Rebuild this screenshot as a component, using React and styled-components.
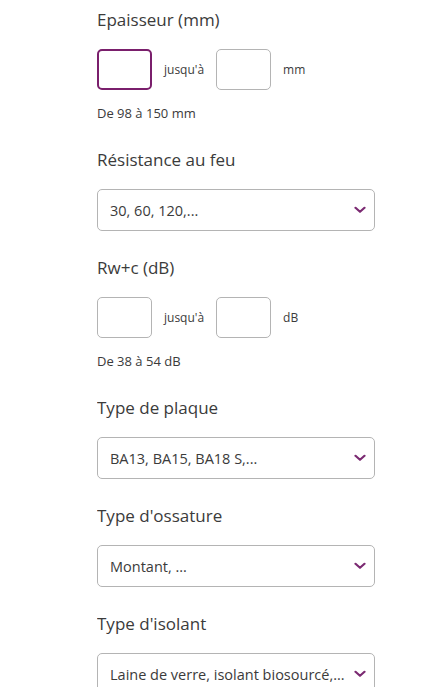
import styled, { createGlobalStyle } from "styled-components"

const GlobalStyle = createGlobalStyle`
  html, body {
    margin: 0;
    padding: 0;
    background: #ffffff;
  }
  body {
    font-family: "Open Sans", "Noto Sans", sans-serif;
    color: #3b3b3b;
  }
`

const Panel = styled.div`
  display: flex;
  flex-direction: column;
  width: 278px;
  margin-left: 97px;
  padding-top: 10px;
  height: 687px;
  overflow: hidden;
  box-sizing: border-box;
`

const Field = styled.div`
  display: flex;
  flex-direction: column;
  margin-bottom: ${(p) => (p.$hint ? "29px" : "27px")};
`

const Label = styled.div`
  font-size: 17px;
  line-height: 20px;
  color: #3b3b3b;
  margin-bottom: 19px;
`

const RangeRow = styled.div`
  display: flex;
  align-items: center;
  gap: 12px;
`

const NumberBox = styled.input`
  width: 55px;
  height: 41px;
  box-sizing: border-box;
  border: ${(p) => (p.$active ? "2px solid #7a1f6c" : "1px solid #b4b4b4")};
  border-radius: 5px;
  background: #fff;
  outline: none;
  padding: 0 8px;
  margin: 0;
  font-family: inherit;
`

const Small = styled.span`
  font-size: 12px;
  color: #3b3b3b;
`

const Hint = styled.div`
  font-size: 13px;
  line-height: 16px;
  color: #3b3b3b;
  margin-top: 15px;
`

const SelectBox = styled.div`
  display: flex;
  align-items: center;
  justify-content: space-between;
  height: 42px;
  box-sizing: border-box;
  border: 1px solid #b4b4b4;
  border-radius: 5px;
  padding: 0 8px 0 12px;
  font-size: 14.5px;
  color: #3b3b3b;
  white-space: nowrap;
`

const Chevron = () => (
  <svg width="12" height="8" viewBox="0 0 12 8">
    <path d="M1.5 1.8 L6 5.8 L10.5 1.8" fill="none" stroke="#7b2a72" strokeWidth="2.2" strokeLinecap="round" strokeLinejoin="round" />
  </svg>
)

function Range({ label, unit, hint, active }) {
  return (
    <Field $hint>
      <Label>{label}</Label>
      <RangeRow>
        <NumberBox $active={active} />
        <Small>jusqu'à</Small>
        <NumberBox />
        <Small>{unit}</Small>
      </RangeRow>
      <Hint>{hint}</Hint>
    </Field>
  )
}

function Picker({ label, placeholder }) {
  return (
    <Field>
      <Label>{label}</Label>
      <SelectBox>
        <span>{placeholder}</span>
        <Chevron />
      </SelectBox>
    </Field>
  )
}

export default function App() {
  return (
    <>
      <GlobalStyle />
      <Panel>
        <Range label="Epaisseur (mm)" unit="mm" hint="De 98 à 150 mm" active />
        <Picker label="Résistance au feu" placeholder="30, 60, 120,..." />
        <Range label="Rw+c (dB)" unit="dB" hint="De 38 à 54 dB" />
        <Picker label="Type de plaque" placeholder="BA13, BA15, BA18 S,..." />
        <Picker label="Type d'ossature" placeholder="Montant, ..." />
        <Picker label="Type d'isolant" placeholder="Laine de verre, isolant biosourcé,..." />
      </Panel>
    </>
  )
}
